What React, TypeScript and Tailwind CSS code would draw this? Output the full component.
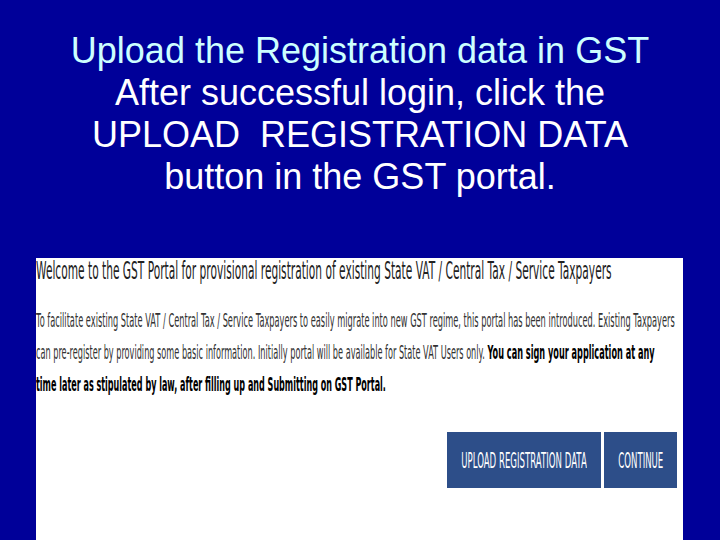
const TITLE_FONT = "font-['Liberation_Sans',Arial,sans-serif]"

export default function App() {
  return (
    <div className="w-[720px] h-[540px] overflow-hidden bg-[#000099] flex flex-col">
      {/* slide title */}
      <div className={`${TITLE_FONT} pt-[30px] text-center text-[36px] leading-[42px] text-white`}>
        <div className="text-[#ccffff]">Upload the Registration data in GST</div>
        <div>After successful login, click the</div>
        <div className="whitespace-pre">UPLOAD  REGISTRATION DATA</div>
        <div>button in the GST portal.</div>
      </div>

      {/* portal screenshot, squeezed horizontally like the pasted image */}
      <div className="mt-[60px] ml-[36px] mr-[37px] flex-1 bg-white font-['DejaVu_Sans',Tahoma,sans-serif]">
        <div className="w-max text-[25px] leading-[25px] text-[#222] whitespace-nowrap origin-left scale-x-[0.425]">
          Welcome to the GST Portal for provisional registration of existing State VAT / Central Tax / Service Taxpayers
        </div>
        <div className="mt-[21px] text-[20px] leading-[32px] text-[#333]">
          <div className="w-max whitespace-nowrap origin-left scale-x-[0.412]">
            To facilitate existing State VAT / Central Tax / Service Taxpayers to easily migrate into new GST regime, this portal has been introduced. Existing Taxpayers
          </div>
          <div className="w-max whitespace-nowrap origin-left scale-x-[0.408]">
            can pre-register by providing some basic information. Initially portal will be available for State VAT Users only.{' '}
            <b className="text-black">You can sign your application at any</b>
          </div>
          <div className="w-max whitespace-nowrap origin-left scale-x-[0.402] font-bold text-black">
            time later as stipulated by law, after filling up and Submitting on GST Portal.
          </div>
        </div>
        <div className="mt-[32px] pr-[6px] flex justify-end gap-[3px]">
          <button className="w-[154px] h-[56px] bg-[#2d4e89] text-white text-[22px] flex items-center justify-center whitespace-nowrap">
            <span className="scale-x-[0.39]">UPLOAD REGISTRATION DATA</span>
          </button>
          <button className="w-[73px] h-[56px] bg-[#2d4e89] text-white text-[22px] flex items-center justify-center whitespace-nowrap">
            <span className="scale-x-[0.39]">CONTINUE</span>
          </button>
        </div>
      </div>
    </div>
  )
}
